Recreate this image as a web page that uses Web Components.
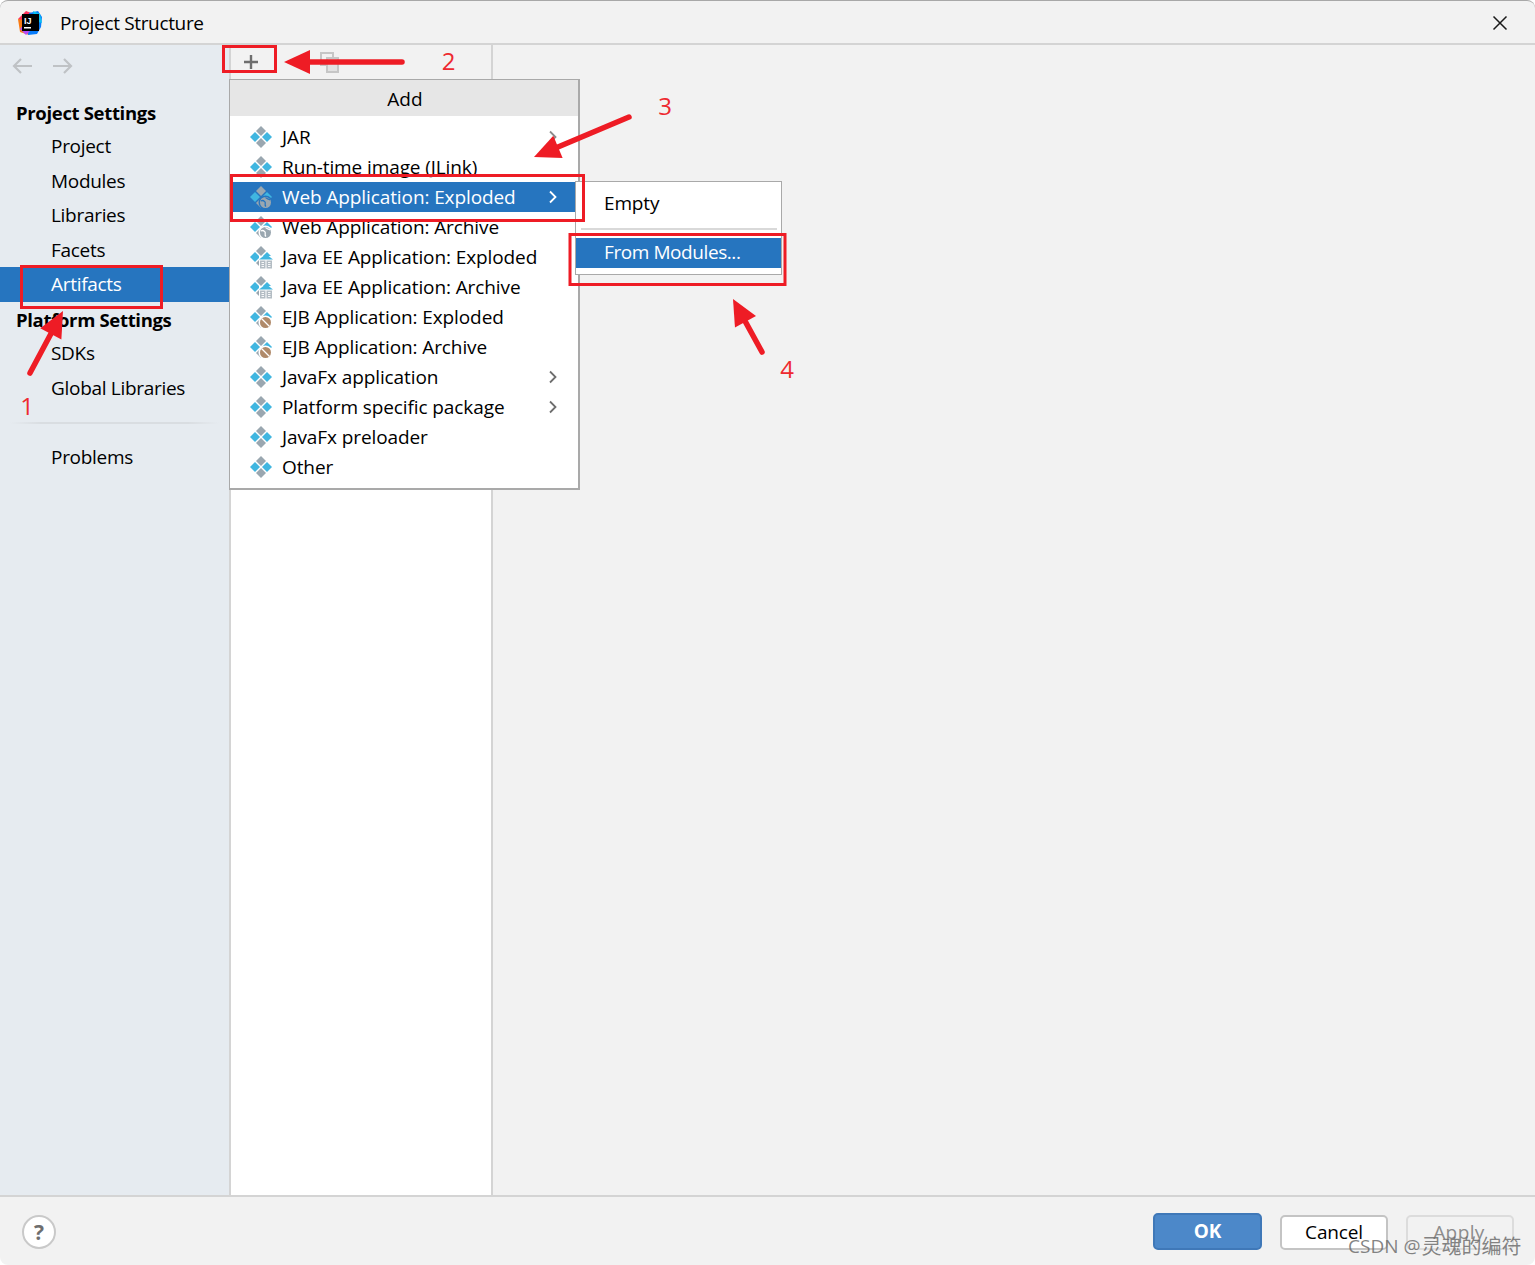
<!DOCTYPE html>
<html lang="en">
<head>
<meta charset="utf-8">
<title>Project Structure</title>
<style>
  html, body { margin: 0; height: 100%; background: #fff; overflow: hidden; }
  body { font: 19px/1 "Open Sans", "Noto Sans", sans-serif; color: #000; }
</style>
</head>
<body>

<template id="artifact-icon-tpl">
  <style>
    :host { display: block; width: 24px; height: 24px; }
    svg { display: block; }
  </style>
  <svg width="24" height="24" viewBox="0 0 24 24"></svg>
</template>

<project-dialog>
  <side-nav slot="nav">
    <nav-heading>Project Settings</nav-heading>
    <nav-item>Project</nav-item>
    <nav-item>Modules</nav-item>
    <nav-item>Libraries</nav-item>
    <nav-item>Facets</nav-item>
    <nav-item selected>Artifacts</nav-item>
    <nav-heading>Platform Settings</nav-heading>
    <nav-item>SDKs</nav-item>
    <nav-item>Global Libraries</nav-item>
    <nav-separator></nav-separator>
    <nav-item>Problems</nav-item>
  </side-nav>

  <popup-menu slot="overlay" title="Add" style="left:229px;top:78px;width:351px">
    <menu-row icon="plain" arrow dim-arrow>JAR</menu-row>
    <menu-row icon="plain">Run-time image (JLink)</menu-row>
    <menu-row icon="web" arrow selected>Web Application: Exploded</menu-row>
    <menu-row icon="web">Web Application: Archive</menu-row>
    <menu-row icon="ee">Java EE Application: Exploded</menu-row>
    <menu-row icon="ee">Java EE Application: Archive</menu-row>
    <menu-row icon="ejb">EJB Application: Exploded</menu-row>
    <menu-row icon="ejb">EJB Application: Archive</menu-row>
    <menu-row icon="plain" arrow>JavaFx application</menu-row>
    <menu-row icon="plain" arrow>Platform specific package</menu-row>
    <menu-row icon="plain">JavaFx preloader</menu-row>
    <menu-row icon="plain">Other</menu-row>
  </popup-menu>

  <sub-menu slot="overlay" style="left:575px;top:180px;width:207px">
    <sub-row>Empty</sub-row>
    <sub-separator></sub-separator>
    <sub-row selected>From Modules...</sub-row>
  </sub-menu>

  <red-marks slot="overlay"></red-marks>
</project-dialog>

<script>
// small helper so each class only has to give its markup
class Base extends HTMLElement {
  constructor() {
    super();
    this.attachShadow({ mode: 'open' });
  }
  connectedCallback() {
    this.shadowRoot.innerHTML = this.markup();
  }
}

const chevron = color => `
  <svg width="10" height="14" viewBox="0 0 10 14">
    <polyline points="2,1.5 7.5,7 2,12.5" fill="none" stroke="${color}" stroke-width="1.8"/>
  </svg>`;

class ProjectDialog extends Base {
  markup() {
    return `
      <style>
        :host {
          display: flex; flex-direction: column; position: relative;
          width: 1535px; height: 1265px; box-sizing: border-box;
          background: #f2f2f2; border-top: 1px solid #a8a8a8;
          border-radius: 8px; overflow: hidden;
        }
        .title {
          flex: none; height: 40px; padding-top: 2px; display: flex; align-items: center;
          border-bottom: 2px solid #d4d4d4; padding-left: 17px;
        }
        .title span { margin-left: 17px; font-size: 19px; letter-spacing: -.34px; }
        .close { margin-left: auto; margin-right: 27px; display: block; }
        .body { flex: 1; display: flex; min-height: 0; }
        .list {
          flex: none; width: 260px; display: flex; flex-direction: column;
          border-right: 2px solid #d4d4d4;
        }
        .tools {
          flex: none; height: 34px; display: flex; align-items: center;
          padding-left: 11px; gap: 60px;
        }
        .rows { flex: 1; background: #fff; }
        .detail { flex: 1; }
        .foot {
          flex: none; height: 66px; display: flex; align-items: center;
          border-top: 2px solid #d4d4d4; padding: 2px 21px 0 22px;
        }
        .foot .gap { flex: 1; }
        .foot dlg-button + dlg-button { margin-left: 18px; }
      </style>
      <div class="title">
        <svg width="26" height="26" viewBox="0 0 26 26">
          <path d="M1 9 9 1l8 3-5 11z" fill="#fe315d"/>
          <path d="M1 9l2 13 9 3 3-13z" fill="#f97a12"/>
          <path d="M12 3l9-2 4 6-1 10-4 7-9 1z" fill="#087cfa"/>
          <path d="M16 1l7 3 2 9-7-2z" fill="#07c3f2"/>
          <path d="M3 19l5-6 5 8-4 4z" fill="#b74af7"/>
          <rect x="5" y="4" width="17" height="17" fill="#000"/>
          <text x="7" y="13.5" font-family="Liberation Sans" font-weight="700" font-size="9" fill="#fff">IJ</text>
          <rect x="7" y="17" width="7" height="1.5" fill="#fff"/>
        </svg>
        <span>Project Structure</span>
        <svg class="close" width="16" height="16" viewBox="0 0 16 16">
          <path d="M1.5 1.5l13 13M14.5 1.5l-13 13" stroke="#1a1a1a" stroke-width="1.5" fill="none"/>
        </svg>
      </div>
      <div class="body">
        <slot name="nav"></slot>
        <div class="list">
          <div class="tools">
            <svg width="18" height="18" viewBox="0 0 18 18">
              <path d="M9 2v14M2 9h14" stroke="#6e6e6e" stroke-width="2.4" fill="none"/>
            </svg>
            <svg width="19" height="21" viewBox="0 0 19 21">
              <path d="M1 1h12v12H1z" fill="none" stroke="#c6c6c6" stroke-width="2"/>
              <path d="M7 6h11v14H7z" fill="#e2e2e2" stroke="#c6c6c6" stroke-width="2"/>
            </svg>
          </div>
          <div class="rows"></div>
        </div>
        <div class="detail"></div>
      </div>
      <div class="foot">
        <help-button></help-button>
        <div class="gap"></div>
        <dlg-button kind="primary">OK</dlg-button>
        <dlg-button>Cancel</dlg-button>
        <dlg-button kind="disabled">Apply</dlg-button>
      </div>
      <slot name="overlay"></slot>
    `;
  }
}

class SideNav extends Base {
  markup() {
    return `
      <style>
        :host {
          flex: none; display: block; width: 229px; box-sizing: content-box;
          background: #e6ebf0; border-right: 2px solid #d4d4d4;
        }
        .arrows { height: 42px; margin-bottom: 8px; display: flex; align-items: center; padding-left: 12px; gap: 19px; box-sizing: border-box; }
      </style>
      <div class="arrows">
        <svg width="21" height="18" viewBox="0 0 21 18">
          <path d="M20 9H2M9 2 2 9l7 7" fill="none" stroke="#bfc2c5" stroke-width="2.2"/>
        </svg>
        <svg width="21" height="18" viewBox="0 0 21 18">
          <path d="M1 9h18M12 2l7 7-7 7" fill="none" stroke="#bfc2c5" stroke-width="2.2"/>
        </svg>
      </div>
      <slot></slot>
    `;
  }
}

class NavHeading extends Base {
  markup() {
    return `
      <style>
        :host {
          display: flex; align-items: center; height: 31.4px; padding: 3px 0 0 16px;
          font-weight: 700; font-size: 18.5px; letter-spacing: -.33px;
        }
      </style>
      <slot></slot>
    `;
  }
}

class NavItem extends Base {
  markup() {
    return `
      <style>
        :host {
          display: flex; align-items: center; height: 34.5px; padding-left: 51px;
          font-size: 19px; letter-spacing: -.3px;
        }
        :host([selected]) { background: #2675bf; color: #fff; }
      </style>
      <slot></slot>
    `;
  }
}

class NavSeparator extends Base {
  markup() {
    return `
      <style>
        :host { display: flex; align-items: center; height: 34.5px; padding: 0 10px; }
        div { flex: 1; height: 2px; background: linear-gradient(90deg, #e6ebf0, #d9dde1 15%, #d9dde1 85%, #e6ebf0); }
      </style>
      <div></div>
    `;
  }
}

class PopupMenu extends Base {
  markup() {
    return `
      <style>
        :host {
          position: absolute; display: block; box-sizing: border-box;
          background: #fff; border: 1px solid #a9a9a9; border-bottom-width: 2px; border-right-width: 2px;
        }
        header {
          height: 36px; box-sizing: border-box; display: flex; align-items: center; justify-content: center;
          background: #e6e6e6; font-size: 19px; padding: 2px 0 0 2px;
        }
        .rows { padding: 6px 0; }
      </style>
      <header>${this.getAttribute('title')}</header>
      <div class="rows"><slot></slot></div>
    `;
  }
}

class MenuRow extends Base {
  markup() {
    const selected = this.hasAttribute('selected');
    const arrowColor = selected ? '#fff' : this.hasAttribute('dim-arrow') ? '#8c8c8c' : '#6e6e6e';
    return `
      <style>
        :host {
          display: flex; align-items: center; height: 30px; padding-left: 19px;
          font-size: 19px; letter-spacing: -.1px; white-space: nowrap;
        }
        :host([selected]) { background: #2675bf; color: #fff; --badge-bg: #2675bf; }
        artifact-icon { margin-right: 9px; flex: none; }
        .chev { margin-left: auto; margin-right: 20px; display: flex; }
      </style>
      <artifact-icon kind="${this.getAttribute('icon')}"></artifact-icon>
      <span><slot></slot></span>
      ${this.hasAttribute('arrow') ? `<span class="chev">${chevron(arrowColor)}</span>` : ''}
    `;
  }
}

// four diamonds, with a small badge in the corner for the packaged kinds
class ArtifactIcon extends HTMLElement {
  constructor() {
    super();
    this.attachShadow({ mode: 'open' });
    this.shadowRoot.append(document.getElementById('artifact-icon-tpl').content.cloneNode(true));
  }
  connectedCallback() {
    const kind = this.getAttribute('kind');
    const diamond = (x, y, fill) => `<path d="M${x} ${y - 5}l5 5-5 5-5-5z" fill="${fill}"/>`;
    const badges = {
      web: `<circle cx="16.5" cy="17.5" r="7" style="fill:var(--badge-bg,#fff)"/>
            <circle cx="16.5" cy="17.5" r="5.5" fill="#9aa7b0"/>
            <path d="M12 16c2-1.5 3 0 4 1s-1 3 1 4.5M16.5 12.500c1 1.500 3 1 4.500 2.500" fill="none" style="stroke:var(--badge-bg,#fff)" stroke-width="1.3"/>`,
      ee: `<path d="M10 11h14v13H10z" fill="#fff"/>
           <path d="M17 9l7 5.5H10z" fill="#40b6e0"/>
           <path d="M11 15.5h5.5v8H11zM17.5 15.5H23v8h-5.5z" fill="#b4bdc4"/>
           <path d="M12.5 17.500h2.500M12.500 19.500h2.500M12.500 21.500h2.500M19 17.500h2.500M19 19.500h2.500M19 21.500h2.500" stroke="#fff" stroke-width=".9"/>`,
      ejb: `<circle cx="16.5" cy="17.5" r="7" fill="#fff"/>
            <circle cx="16.5" cy="17.5" r="5.5" fill="#b08a6a"/>
            <path d="M12.5 13.5l8 8" stroke="#fff" stroke-width="1.2"/>`
    };
    this.shadowRoot.querySelector('svg').innerHTML =
      diamond(12, 6, '#9aa7b0') + diamond(6, 12, '#40b6e0') +
      diamond(18, 12, '#40b6e0') + diamond(12, 18, '#9aa7b0') + (badges[kind] || '');
  }
}

class SubMenu extends Base {
  markup() {
    return `
      <style>
        :host {
          position: absolute; display: block; box-sizing: border-box;
          background: #fff; border: 1px solid #a9a9a9; padding: 6px 0 6px;
        }
      </style>
      <slot></slot>
    `;
  }
}

class SubRow extends Base {
  markup() {
    return `
      <style>
        :host {
          display: flex; align-items: center; height: 30px; padding-left: 28px; box-sizing: border-box;
          font-size: 19px; letter-spacing: -.15px;
        }
        :host([selected]) { background: #2675bf; color: #fff; letter-spacing: -.42px; padding-bottom: 2px; }
      </style>
      <slot></slot>
    `;
  }
}

class SubSeparator extends Base {
  markup() {
    return `
      <style>
        :host { display: flex; align-items: center; height: 20px; padding: 0 4px 0 5px; }
        div { flex: 1; height: 2px; background: #d9d9d9; margin-top: 2px; }
      </style>
      <div></div>
    `;
  }
}

class HelpButton extends Base {
  markup() {
    return `
      <style>
        :host {
          display: flex; align-items: center; justify-content: center;
          width: 34px; height: 34px; box-sizing: border-box;
          border: 2px solid #c9c9c9; border-radius: 50%; background: #fff;
          color: #6e6e6e; font: 700 21px "Open Sans", sans-serif;
        }
      </style>
      ?
    `;
  }
}

class DlgButton extends Base {
  markup() {
    return `
      <style>
        :host {
          display: flex; align-items: center; justify-content: center;
          width: 108px; height: 35px; box-sizing: border-box;
          border: 2px solid #c4c4c4; border-radius: 5px; background: #fff;
          font-size: 19px; letter-spacing: -.15px;
        }
        :host([kind="primary"]) {
          background: #4c88c9; border-color: #3f78b8; color: #fff;
          font-weight: 700; width: 109px; height: 37px; margin-bottom: 1px;
        }
        :host([kind="disabled"]) {
          background: #f2f2f2; border-color: #dcdcdc; color: #8c8c8c;
          letter-spacing: .4px; padding-right: 2px;
        }
      </style>
      <slot></slot>
    `;
  }
}

// the numbered red notes drawn on the screenshot, plus the watermark
class RedMarks extends Base {
  markup() {
    const arrow = (x1, y1, x2, y2) => {
      // shaft from (x1,y1) to a triangle whose tip is (x2,y2)
      const len = Math.hypot(x2 - x1, y2 - y1);
      const ux = (x2 - x1) / len, uy = (y2 - y1) / len;
      const bx = x2 - ux * 26, by = y2 - uy * 26;
      const nx = -uy, ny = ux;
      return `<line x1="${x1}" y1="${y1}" x2="${bx}" y2="${by}" stroke="#ee1c25" stroke-width="5.5" stroke-linecap="round"/>
        <polygon points="${x2},${y2} ${bx + nx * 12},${by + ny * 12} ${bx - nx * 12},${by - ny * 12}" fill="#ee1c25"/>`;
    };
    const box = (x, y, w, h) =>
      `<rect x="${x}" y="${y}" width="${w}" height="${h}" fill="none" stroke="#ee1c25" stroke-width="3"/>`;
    return `
      <style>
        :host { position: absolute; inset: -1px 0 0 0; display: block; pointer-events: none; }
        svg { position: absolute; left: 0; top: 0; }
        text.n { font: 24px "Open Sans", sans-serif; fill: #ee2a30; text-anchor: middle; }
        .mark {
          position: absolute; left: 1348px; top: 1231px; white-space: nowrap; display: flex; align-items: center;
          font: 20px "Liberation Sans", "Noto Sans CJK SC", sans-serif; color: rgba(110,110,110,.85);
        }
        .mark span { font: 19px "Open Sans", sans-serif; white-space: pre; margin-right: 1px; }
      </style>
      <svg width="1535" height="1265" viewBox="0 0 1535 1265">
        ${box(21.5, 266.5, 140, 41)}
        ${box(223.5, 46.5, 52, 25)}
        ${box(231.5, 175.5, 352, 45)}
        ${box(570, 234.5, 215, 50)}
        ${arrow(30, 373, 63, 311)}
        ${arrow(402, 62, 284, 62)}
        ${arrow(629, 117, 534, 157)}
        ${arrow(762, 352, 733, 299)}
        <text class="n" x="27" y="415">1</text>
        <text class="n" x="448.5" y="70">2</text>
        <text class="n" x="665" y="115">3</text>
        <text class="n" x="787" y="378">4</text>
      </svg>
      <div class="mark"><span>CSDN @</span>灵魂的编符</div>
    `;
  }
}

customElements.define('artifact-icon', ArtifactIcon);
customElements.define('project-dialog', ProjectDialog);
customElements.define('side-nav', SideNav);
customElements.define('nav-heading', NavHeading);
customElements.define('nav-item', NavItem);
customElements.define('nav-separator', NavSeparator);
customElements.define('popup-menu', PopupMenu);
customElements.define('menu-row', MenuRow);
customElements.define('sub-menu', SubMenu);
customElements.define('sub-row', SubRow);
customElements.define('sub-separator', SubSeparator);
customElements.define('help-button', HelpButton);
customElements.define('dlg-button', DlgButton);
customElements.define('red-marks', RedMarks);
</script>
</body>
</html>
